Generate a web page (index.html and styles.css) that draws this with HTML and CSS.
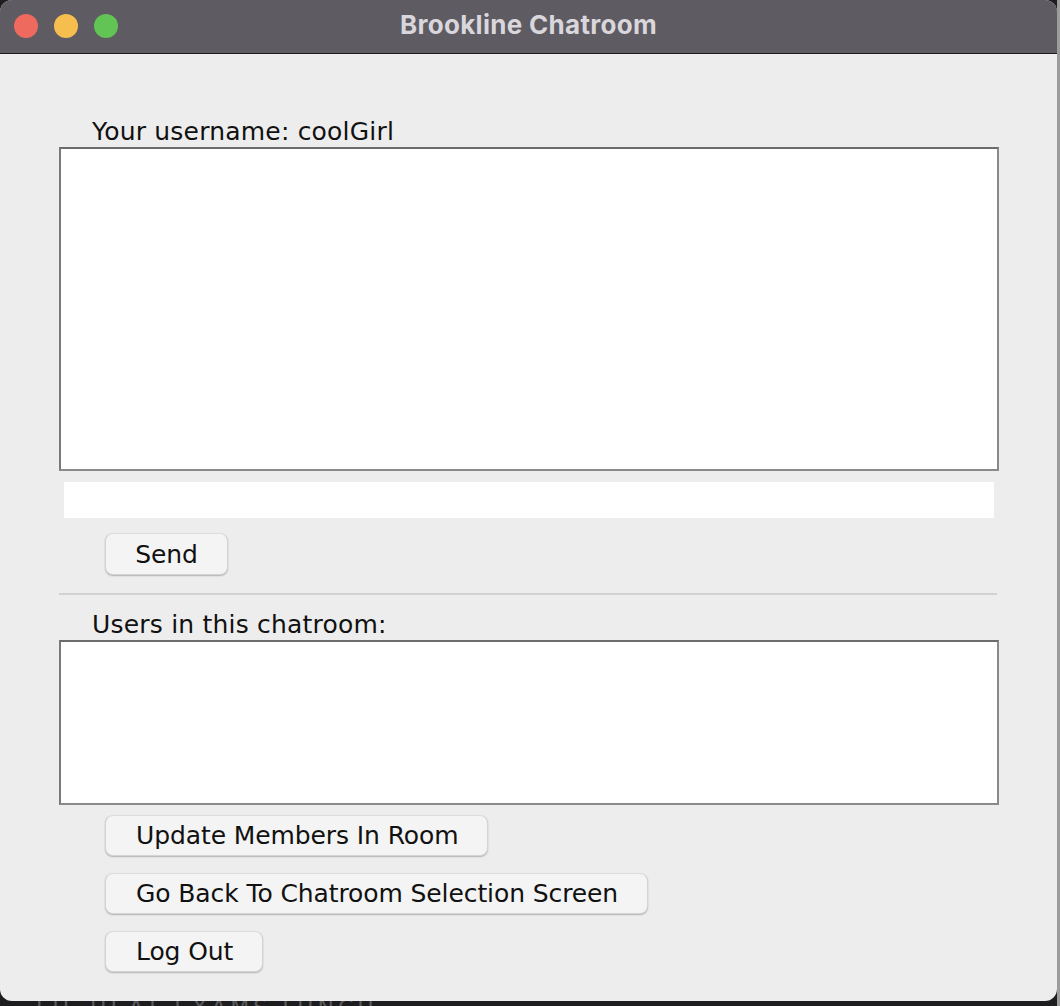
FILE: index.html
```html
<!DOCTYPE html>
<html>
<head>
<meta charset="utf-8">
<link rel="stylesheet" href="styles.css">
</head>
<body>
<div class="screen">
  <div class="window">
    <div class="titlebar">
      <div class="lights">
        <span class="light red"></span>
        <span class="light yellow"></span>
        <span class="light green"></span>
      </div>
      <div class="title">Brookline Chatroom</div>
    </div>
    <div class="content">
      <div class="label">Your username: coolGirl</div>
      <div class="area area-chat"></div>
      <div class="field"></div>
      <div class="btn-row first"><button class="btn btn-send">Send</button></div>
      <div class="sep"></div>
      <div class="label label2">Users in this chatroom:</div>
      <div class="area area-users"></div>
      <div class="btn-row b1"><button class="btn">Update Members In Room</button></div>
      <div class="btn-row b2"><button class="btn">Go Back To Chatroom Selection Screen</button></div>
      <div class="btn-row b2"><button class="btn">Log Out</button></div>
    </div>
  </div>
  <div class="behind">LIL HEAT EXAMS LUNCH</div>
</div>
</body>
</html>
```
FILE: styles.css
```css
html, body {
  margin: 0;
  padding: 0;
  background: #1d1d1f;
  overflow: hidden;
}
.screen {
  width: 1060px;
  height: 1006px;
  position: relative;
  background: linear-gradient(to right, #1d1d1f 0, #1d1d1f 1057px, #9c9c9c 1057px);
}
.window {
  width: 1057px;
  height: 1001px;
  background: #ededed;
  border-radius: 12px;
  overflow: hidden;
  display: flex;
  flex-direction: column;
}
.titlebar {
  height: 53px;
  flex: none;
  background: #5e5b62;
  border-bottom: 1px solid #1c1c1e;
  position: relative;
  display: flex;
  align-items: center;
  justify-content: center;
}
.lights {
  position: absolute;
  left: 14px;
  top: 14px;
  display: flex;
  gap: 16px;
}
.light {
  width: 24px;
  height: 24px;
  border-radius: 50%;
  display: block;
}
.red { background: #ee6a5f; }
.yellow { background: #f5be4f; }
.green { background: #61c454; }
.title {
  font-family: "Inter", "Liberation Sans", sans-serif;
  font-weight: 700;
  font-size: 26px;
  letter-spacing: 0.3px;
  line-height: 30px;
  color: #d9d6dc;
  margin-top: -4px;
}
.content {
  display: flex;
  flex-direction: column;
  align-items: flex-start;
  padding-left: 59px;
  font-family: "DejaVu Sans", "Liberation Sans", sans-serif;
  color: #111;
}
.label {
  margin-top: 63px;
  padding-left: 33px;
  font-size: 25px;
  letter-spacing: 0.2px;
  line-height: 30px;
  height: 30px;
}
.label2 {
  margin-top: 15px;
}
.area {
  width: 936px;
  background: #fff;
  border: 2px solid #8a8a8a;
  border-top-color: #6c6c6c;
  border-left-color: #7a7a7a;
}
.area-chat { height: 320px; }
.area-users { height: 161px; }
.field {
  width: 930px;
  height: 36px;
  margin: 11px 0 0 5px;
  background: #fff;
}
.btn-row {
  padding-left: 46px;
  display: flex;
}
.btn-row.first { margin-top: 15px; }
.btn-row.b1 { margin-top: 10px; }
.btn-row.b2 { margin-top: 17px; }
.btn {
  height: 41px;
  padding: 0 29px 0 30px;
  border: 1px solid #d4d4d4;
  border-top-color: #dcdcdc;
  border-radius: 8px;
  background: #f4f4f4;
  box-shadow: 0 1px 1.5px rgba(0, 0, 0, 0.25);
  font-family: "DejaVu Sans", "Liberation Sans", sans-serif;
  font-size: 25px;
  letter-spacing: -0.1px;
  color: #111;
  line-height: 37px;
  cursor: default;
}
.btn-send {
  width: 123px;
  height: 42px;
  padding: 0;
}
.sep {
  width: 938px;
  height: 2px;
  margin-top: 18px;
  background: #d2d2d2;
}
.behind {
  position: absolute;
  left: 36px;
  top: 998px;
  font-family: "DejaVu Sans", sans-serif;
  font-size: 22px;
  letter-spacing: 4px;
  color: #5a5a5a;
  line-height: 20px;
  height: 8px;
  overflow: hidden;
  clip-path: inset(3px 0 0 0);
}
```
